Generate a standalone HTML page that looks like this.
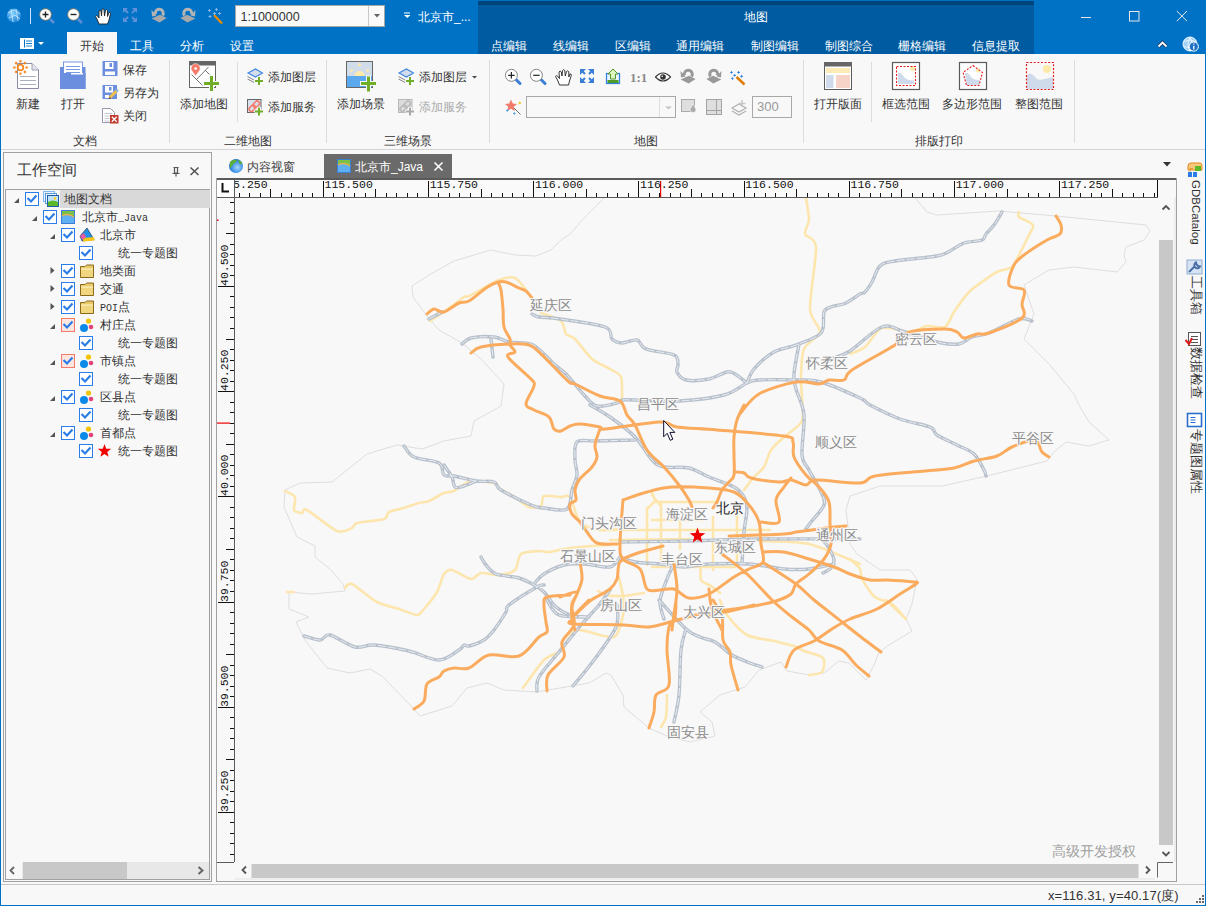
<!DOCTYPE html>
<html><head><meta charset="utf-8">
<style>
*{box-sizing:border-box;margin:0;padding:0}
html,body{width:1206px;height:906px;overflow:hidden;background:#f8f8f8;font-family:"Liberation Sans",sans-serif;font-size:12px;color:#333}
.a{position:absolute}
.w{color:#fff}
.t{position:absolute;white-space:nowrap;line-height:14px;font-size:12px;color:#333}
svg{position:absolute;overflow:visible}
.m{font-family:"Liberation Mono",monospace;font-size:10px}
</style></head><body>
<!-- window frame -->
<div class="a" style="left:0;top:0;width:1206px;height:906px;border:1px solid #0072c6;border-top:none"></div>
<!-- title bar -->
<div class="a" style="left:0;top:0;width:1206px;height:54px;background:#0072c6"></div>
<div class="a" style="left:478px;top:1px;width:556px;height:53px;background:#005ba1"></div>
<div class="a" style="left:478px;top:1px;width:556px;height:4px;background:#00447a"></div>
<div class="a" style="left:67px;top:32px;width:50px;height:22px;background:#f8f8f8"></div>
<div id="titlebar">
<svg style="left:0;top:0" width="1206" height="54">
<defs>
<radialGradient id="glb" cx="0.4" cy="0.35" r="0.7"><stop offset="0" stop-color="#7fd0ff"/><stop offset="1" stop-color="#1a7fd6"/></radialGradient>
</defs>
<!-- globe -->
<circle cx="14" cy="15.5" r="7" fill="url(#glb)"/>
<path d="M8 13 L14 10 L20 14 M9 18 L15 15 L20 19 M11 9 L13 22 M16 9 L18 21" stroke="#d8f0ff" stroke-width="0.8" fill="none" opacity="0.9"/>
<line x1="30.5" y1="8" x2="30.5" y2="24" stroke="#cfe3f5" stroke-width="1"/>
<!-- zoom in -->
<line x1="50" y1="19" x2="54" y2="23" stroke="#5a8fd6" stroke-width="2.5"/>
<circle cx="45.5" cy="14.5" r="5.8" fill="#fff" stroke="#8a7a60" stroke-width="0.9"/>
<path d="M42.5 14.5h6M45.5 11.5v6" stroke="#222" stroke-width="1.4"/>
<!-- zoom out -->
<line x1="78" y1="19" x2="82" y2="23" stroke="#5a8fd6" stroke-width="2.5"/>
<circle cx="73.5" cy="14.5" r="5.8" fill="#fff" stroke="#8a7a60" stroke-width="0.9"/>
<path d="M70.5 14.5h6" stroke="#222" stroke-width="1.4"/>
<!-- hand -->
<path d="M99 24 L97 19 L95.5 16.5 Q96 15 97.5 16 L99 18 L99 11 Q100 9.5 101 11 L101.5 16 L102 9.5 Q103 8 104 9.5 L104.5 16 L105.5 10.5 Q106.5 9 107.5 10.5 L107.5 16.5 L109 12.5 Q110.5 12 110.5 13.5 L109 20 L107.5 24 Z" fill="#fff" stroke="#222" stroke-width="0.9"/>
<!-- full extent disabled -->
<g stroke="#5f90d8" stroke-width="2" fill="none">
<path d="M124 9l4 4M136 9l-4 4M124 21l4-4M136 21l-4-4"/>
</g>
<g fill="#5f90d8"><path d="M123 8h5l-5 5z"/><path d="M137 8h-5l5 5z"/><path d="M123 22h5l-5-5z"/><path d="M137 22h-5l5-5z"/></g>
<!-- rotate1 -->
<path d="M151.6 18.6 L159.9 14.7 L166.6 18 L159.6 22.6 Z" fill="#a8a8a8"/>
<path d="M155.5 14.5 A4 4 0 1 1 162.5 15.5" fill="none" stroke="#b4b4b4" stroke-width="3"/>
<path d="M151.5 10 L156.5 15.5 L152 16.5 Z" fill="#b4b4b4"/>
<path d="M195.4 18.6 L187.1 14.7 L180.4 18 L187.4 22.6 Z" fill="#a8a8a8"/>
<path d="M191.5 14.5 A4 4 0 1 0 184.5 15.5" fill="none" stroke="#b4b4b4" stroke-width="3"/>
<path d="M195.5 10 L190.5 15.5 L195 16.5 Z" fill="#b4b4b4"/>
<!-- wand -->
<line x1="214" y1="15" x2="222" y2="23.5" stroke="#f08c00" stroke-width="2.2"/>
<g fill="#8cb8ea"><path d="M208 10.5h3M209.5 9v3M213 13.5h3M214.5 12v3M208.5 16.5h3M210 15v3M215 9.5h3M216.5 8v3M218 13.5h3M219.5 12v3" stroke="#8cb8ea" stroke-width="0.9"/></g>
<!-- scale combo -->
<rect x="235.5" y="5.5" width="149" height="21" fill="#fafafa" stroke="#a6a6a6"/>
<line x1="368.5" y1="6" x2="368.5" y2="26" stroke="#c8c8c8"/>
<path d="M374 14h6l-3 3.5z" fill="#666"/>
<!-- doc dropdown -->
<path d="M404.5 13h5.5M404 15h6.5l-3.2 3z" stroke="#fff" stroke-width="0" fill="#fff"/>
<rect x="404" y="12.5" width="6" height="1" fill="#fff"/>
<!-- window controls -->
<line x1="1081" y1="17.5" x2="1091" y2="17.5" stroke="#e6e6e6" stroke-width="1"/>
<rect x="1129.5" y="11.5" width="9.5" height="9.5" fill="none" stroke="#e6e6e6" stroke-width="1"/>
<path d="M1176.8 11 L1187 21.2 M1187 11 L1176.8 21.2" stroke="#e6e6e6" stroke-width="1"/>
<!-- collapse caret -->
<path d="M1158.5 46.5 L1162.5 42.5 L1166.5 46.5" stroke="#1a3050" stroke-width="3.2" fill="none"/><path d="M1158.5 46.5 L1162.5 42.5 L1166.5 46.5" stroke="#fff" stroke-width="1.8" fill="none"/>
<!-- info globe -->
<circle cx="1190" cy="44" r="7" fill="#9fd0f7" stroke="#fff" stroke-width="0.9"/>
<path d="M1184 41.5 Q1190 38.5 1196 41.5 M1184 46.5 Q1190 49.5 1196 46.5 M1190 37 Q1186 44 1190 51 M1190 37 Q1194 44 1190 51" stroke="#fff" stroke-width="0.7" fill="none"/>
<circle cx="1193.8" cy="46.6" r="4.6" fill="#1f6fc4" stroke="#fff" stroke-width="1"/>
<path d="M1193.8 45.8v3.6M1193.8 43.6v1" stroke="#fff" stroke-width="1.3"/>
<!-- app menu icon -->
<rect x="20.5" y="38.5" width="13" height="10" fill="#fff" stroke="#fff"/>
<rect x="24" y="39.5" width="1" height="8" fill="#0072c6"/>
<path d="M26 41h6M26 43.5h6M26 46h6" stroke="#0072c6" stroke-width="0.9"/>
<path d="M38 42h6l-3 3z" fill="#fff"/>
</svg>
<div class="t" style="left:240.5px;top:10px;font-size:12.5px;color:#333">1:1000000</div>
<div class="t w" style="left:418px;top:10px;font-size:12px;color:#fff">北京市_...</div>
<div class="t w" style="left:744px;top:10px;font-size:12px;color:#fff">地图</div>
<div class="t" style="left:80px;top:39px;font-size:12px;color:#333">开始</div>
<div class="t w" style="left:130px;top:39px;font-size:12px;color:#fff">工具</div>
<div class="t w" style="left:180px;top:39px;font-size:12px;color:#fff">分析</div>
<div class="t w" style="left:230px;top:39px;font-size:12px;color:#fff">设置</div>
<div class="t w" style="left:491px;top:39px;font-size:12px;color:#fff">点编辑</div>
<div class="t w" style="left:553px;top:39px;font-size:12px;color:#fff">线编辑</div>
<div class="t w" style="left:615px;top:39px;font-size:12px;color:#fff">区编辑</div>
<div class="t w" style="left:676px;top:39px;font-size:12px;color:#fff">通用编辑</div>
<div class="t w" style="left:751px;top:39px;font-size:12px;color:#fff">制图编辑</div>
<div class="t w" style="left:825px;top:39px;font-size:12px;color:#fff">制图综合</div>
<div class="t w" style="left:898px;top:39px;font-size:12px;color:#fff">栅格编辑</div>
<div class="t w" style="left:972px;top:39px;font-size:12px;color:#fff">信息提取</div>
</div>
<!-- ribbon -->
<div class="a" style="left:1px;top:54px;width:1204px;height:95px;background:#f8f8f8"></div>
<div class="a" style="left:1px;top:149px;width:1204px;height:1px;background:#d4d4d4"></div>
<div id="ribbon">
<svg style="left:0;top:54px" width="1206" height="96">
<g transform="translate(0,-54)">
<!-- 新建 -->
<path d="M17.5 63.5 H32 L38.5 70 V88.5 H17.5 Z" fill="#fff" stroke="#8c8aa6" stroke-width="1"/>
<path d="M32 63.5 V70 H38.5" fill="#e6e6ee" stroke="#8c8aa6" stroke-width="0.8"/>
<path d="M20 76.5h16M20 80.5h16M20 84.5h16" stroke="#a8b0c0" stroke-width="1"/>
<g stroke="#f7891f" stroke-width="2.2">
<circle cx="20.5" cy="67.5" r="2.8" fill="#fff" stroke-width="1.8"/>
<path d="M20.5 60.2v2.4M20.5 72.4v2.4M13.2 67.5h2.4M25.4 67.5h2.4M15.3 62.3l1.6 1.6M24.1 71.1l1.6 1.6M15.3 72.7l1.6-1.6M24.1 63.9l1.6-1.6"/>
</g>
<!-- 打开 -->
<rect x="60" y="67" width="25.5" height="22" fill="#6b8fde"/>
<rect x="63.5" y="62" width="19" height="12" fill="#fff" stroke="#6b8fde" stroke-width="0.9"/>
<path d="M66 66.5h14M66 69.5h14M66 72.5h14" stroke="#6b8fde" stroke-width="0.9"/>
<rect x="60" y="73" width="25.5" height="16" fill="#6b8fde"/>
<rect x="71" y="73" width="12" height="1.5" fill="#fff"/>
<!-- 保存 -->
<rect x="102.5" y="61" width="15" height="15" rx="0.5" fill="#6b8fde"/>
<rect x="105" y="62" width="8.5" height="7" fill="#fff"/>
<rect x="109.5" y="63" width="2.5" height="4" fill="#6b8fde"/>
<rect x="105" y="71.5" width="10" height="3.5" fill="#fff"/>
<!-- 另存为 -->
<rect x="102.5" y="85" width="14.5" height="14" rx="0.5" fill="#6b8fde"/>
<rect x="105" y="86" width="8" height="6.5" fill="#fff"/>
<rect x="109" y="87" width="2.5" height="3.5" fill="#6b8fde"/>
<rect x="105" y="95" width="4" height="3" fill="#fff"/>
<path d="M109.5 98 L117 90.5" stroke="#f0c050" stroke-width="3"/>
<path d="M116 89.5 L118 91.5" stroke="#7fb0e8" stroke-width="2"/>
<path d="M108.5 99.5 L110 96.5 L111 98.5Z" fill="#555"/>
<!-- 关闭 -->
<path d="M102.5 108.5 H110.5 L114.5 112.5 V122.5 H102.5 Z" fill="#fff" stroke="#8c8aa6" stroke-width="0.9"/>
<path d="M104.5 113.5h8M104.5 116h8M104.5 118.5h5M104.5 121h5" stroke="#b8bcc8" stroke-width="0.8"/>
<rect x="110" y="115" width="8.5" height="8.5" fill="#c0392b"/>
<path d="M111.8 116.8 L116.7 121.7 M116.7 116.8 L111.8 121.7" stroke="#fff" stroke-width="1.3"/>
<!-- separators -->
<line x1="169.5" y1="60" x2="169.5" y2="143" stroke="#dcdcdc"/>
<line x1="237.5" y1="62" x2="237.5" y2="122" stroke="#dcdcdc"/>
<line x1="326.5" y1="60" x2="326.5" y2="143" stroke="#dcdcdc"/>
<line x1="489.5" y1="60" x2="489.5" y2="143" stroke="#dcdcdc"/>
<line x1="803.5" y1="60" x2="803.5" y2="143" stroke="#dcdcdc"/>
<line x1="871.5" y1="62" x2="871.5" y2="122" stroke="#dcdcdc"/>
<line x1="1074.5" y1="60" x2="1074.5" y2="143" stroke="#dcdcdc"/>
</g>
</svg>
<div class="t" style="left:16px;top:97px">新建</div>
<div class="t" style="left:61px;top:97px">打开</div>
<div class="t" style="left:123px;top:63px">保存</div>
<div class="t" style="left:123px;top:86px">另存为</div>
<div class="t" style="left:123px;top:109px">关闭</div>
<div class="t" style="left:73px;top:134px">文档</div>
<div class="t" style="left:180px;top:97px">添加地图</div>
<div class="t" style="left:268px;top:70px">添加图层</div>
<div class="t" style="left:268px;top:100px">添加服务</div>
<div class="t" style="left:224px;top:134px">二维地图</div>
<div class="t" style="left:337px;top:97px">添加场景</div>
<div class="t" style="left:419px;top:70px">添加图层</div>
<div class="t" style="left:419px;top:100px;color:#a8a8a8">添加服务</div>
<div class="t" style="left:384px;top:134px">三维场景</div>
<div class="t" style="left:634px;top:134px">地图</div>
<div class="t" style="left:814px;top:97px">打开版面</div>
<div class="t" style="left:882px;top:97px">框选范围</div>
<div class="t" style="left:942px;top:97px">多边形范围</div>
<div class="t" style="left:1015px;top:97px">整图范围</div>
<div class="t" style="left:915px;top:134px">排版打印</div>
<svg style="left:0;top:0" width="1206" height="150">
<!-- 添加地图 -->
<rect x="189.5" y="61.5" width="26" height="26" fill="#fff" stroke="#666" stroke-width="1"/>
<rect x="189" y="61" width="27" height="4.5" fill="#666"/>
<path d="M191.5 74.5 L202.5 85.5 M196.5 79.5 L208.5 67 M205 70 L209.5 74.5" stroke="#666" stroke-width="0.9"/>
<path d="M195.6 76 L191.6 70.5 A4.6 4.6 0 1 1 199.6 70.5 Z" fill="#f47b6b" stroke="#fff" stroke-width="0.6"/>
<circle cx="195.6" cy="68.6" r="1.3" fill="#fff"/>
<rect x="203" y="75" width="17" height="17" fill="#f8f8f8" opacity="0" />
<path d="M203.5 83.6h16M211.5 75.5v16" stroke="#f8f8f8" stroke-width="5"/>
<path d="M204 83.6h15M211.5 76v15" stroke="#6fae26" stroke-width="3"/>
<!-- 添加图层 (2D) -->
<g id="addlayer">
<path d="M248 73 L255.5 69 L262.5 73 L255.5 77 Z" fill="#d3dcea" stroke="#3d86e0" stroke-width="1.1"/>
<path d="M247.5 76.5 L254 80 M247.5 79 L254 82.5" stroke="#666" stroke-width="0.8"/>
<path d="M254.5 81h9M259 76.5v9" stroke="#f8f8f8" stroke-width="4"/>
<path d="M255 81h8M259 77v8" stroke="#6fae26" stroke-width="2"/>
</g>
<!-- 添加服务 (2D) -->
<rect x="247.5" y="99.5" width="13.5" height="13" fill="#d8e2ee" stroke="#666" stroke-width="1"/>
<g transform="rotate(-45 254.25 106.25)"><rect x="248" y="104" width="7" height="4.5" rx="2" fill="none" stroke="#f47b6b" stroke-width="1.6"/><rect x="253.5" y="104" width="7" height="4.5" rx="2" fill="none" stroke="#f47b6b" stroke-width="1.6"/></g>
<path d="M254.5 111.5h9M259 107v9" stroke="#f8f8f8" stroke-width="4"/>
<path d="M255 111.5h8M259 107.5v8" stroke="#6fae26" stroke-width="2"/>
<!-- 添加场景 -->
<rect x="346.5" y="61.5" width="26" height="26" fill="#d1dcea" stroke="#666" stroke-width="1"/>
<rect x="347" y="76" width="25" height="11" fill="#5aa9ee"/>
<path d="M354.5 76 A5 5 0 0 1 364.5 76 Z" fill="#fde9a8"/>
<path d="M357.5 66 L359.5 62.5 L361.5 66 Z M349 69.5 L353.5 69.5 L351.5 72.5 Z M365.5 69.5 L370 69.5 L367.8 72.5 Z" fill="#fde9a8"/>
<path d="M360 83.6h17M368.5 75.5v17" stroke="#f8f8f8" stroke-width="5"/>
<path d="M361 83.6h15M368.5 76.5v15" stroke="#6fae26" stroke-width="3"/>
<!-- 添加图层 (3D) -->
<path d="M399 73 L406.5 69 L413.5 73 L406.5 77 Z" fill="#d3dcea" stroke="#3d86e0" stroke-width="1.1"/>
<path d="M398.5 76.5 L405 80 M398.5 79 L405 82.5" stroke="#666" stroke-width="0.8"/>
<path d="M405.5 81h9M410 76.5v9" stroke="#f8f8f8" stroke-width="4"/>
<path d="M406 81h8M410 77v8" stroke="#6fae26" stroke-width="2"/>
<path d="M472 76h5l-2.5 2.5z" fill="#444"/>
<!-- 添加服务 (3D disabled) -->
<rect x="398.5" y="99.5" width="13.5" height="13" fill="#dcdcdc" stroke="#b8b8b8" stroke-width="1"/>
<g transform="rotate(-45 405.25 106.25)"><rect x="399" y="104" width="7" height="4.5" rx="2" fill="none" stroke="#bbb" stroke-width="1.6"/><rect x="404.5" y="104" width="7" height="4.5" rx="2" fill="none" stroke="#bbb" stroke-width="1.6"/></g>
<path d="M405.5 111.5h9M410 107v9" stroke="#f8f8f8" stroke-width="4"/>
<path d="M406 111.5h8M410 107.5v8" stroke="#aaa" stroke-width="2"/>
<!-- map group row1 -->
<line x1="516" y1="79.5" x2="520" y2="83.5" stroke="#3a7fd5" stroke-width="3" stroke-linecap="round"/>
<circle cx="511.4" cy="75.3" r="6" fill="#fff" stroke="#777" stroke-width="0.9"/>
<path d="M508.2 75.3h6.4M511.4 72.1v6.4" stroke="#222" stroke-width="1.2"/>
<line x1="541" y1="79.5" x2="545" y2="83.5" stroke="#3a7fd5" stroke-width="3" stroke-linecap="round"/>
<circle cx="536.4" cy="75.3" r="6" fill="#fff" stroke="#777" stroke-width="0.9"/>
<path d="M533.2 75.3h6.4" stroke="#222" stroke-width="1.2"/>
<path d="M559.5 85 L557.5 80 L555.5 76.5 Q556 75 557.5 76 L559.5 78.5 L559 72 Q560 70 561.3 72 L562 76 L562.5 70.5 Q563.5 68.8 564.8 70.5 L565.3 76 L566.5 71.5 Q567.8 70 568.8 71.8 L568.8 77 L570 74 Q571.5 73.5 571.3 75.5 L569.5 81 L568.5 85 Z" fill="#fff" stroke="#222" stroke-width="0.9"/>
<g fill="#3a7fd5"><path d="M580 69h6l-6 6z"/><path d="M594 69h-6l6 6z"/><path d="M580 83h6l-6-6z"/><path d="M594 83h-6l6-6z"/></g>
<g stroke="#3a7fd5" stroke-width="2"><path d="M581 70l4 4M593 70l-4 4M581 82l4-4M593 82l-4-4"/></g>
<rect x="606.5" y="73.5" width="13" height="10" fill="#e8f4ff" stroke="#2f7ee0" stroke-width="1.2"/>
<rect x="607.5" y="80" width="11" height="3" fill="#4f9a2a"/>
<path d="M613 69 L618 74 L615.5 74 L615.5 79 L610.5 79 L610.5 74 L608 74 Z" fill="#dff5c0" stroke="#4f9a2a" stroke-width="1"/>
<text x="630" y="82" font-family="Liberation Serif" font-weight="bold" font-size="13" fill="#8a8a8a">1:1</text>
<path d="M655.5 77 Q663 69 670.5 77 Q663 85 655.5 77 Z" fill="#fff" stroke="#333" stroke-width="1.1"/>
<circle cx="663" cy="77" r="2.8" fill="#333"/><circle cx="662.2" cy="76.2" r="0.8" fill="#fff"/>
<path d="M680.6 79.6 L688.9 75.7 L695.6 79 L688.6 83.6 Z" fill="#999"/>
<path d="M684.5 75.5 A4 4 0 1 1 691.5 76.5" fill="none" stroke="#999" stroke-width="3"/>
<path d="M680.5 71 L685.5 76.5 L681 77.5 Z" fill="#999"/>
<path d="M721.4 79.6 L713.1 75.7 L706.4 79 L713.4 83.6 Z" fill="#999"/>
<path d="M717.5 75.5 A4 4 0 1 0 710.5 76.5" fill="none" stroke="#999" stroke-width="3"/>
<path d="M721.5 71 L716.5 76.5 L721 77.5 Z" fill="#999"/>
<line x1="736.5" y1="77" x2="744.5" y2="84.5" stroke="#e07b00" stroke-width="2.4"/>
<g fill="#2f7ee0"><path d="M731.5 70.69999999999999l0.6 1.1l1.1 0.6l-1.1 0.6l-0.6 1.1l-0.6-1.1l-1.1-0.6l1.1-0.6z"/><path d="M738.6 70.69999999999999l0.6 1.1l1.1 0.6l-1.1 0.6l-0.6 1.1l-0.6-1.1l-1.1-0.6l1.1-0.6z"/><path d="M734.6 73.69999999999999l0.6 1.1l1.1 0.6l-1.1 0.6l-0.6 1.1l-0.6-1.1l-1.1-0.6l1.1-0.6z"/><path d="M741.6 74.6l0.6 1.1l1.1 0.6l-1.1 0.6l-0.6 1.1l-0.6-1.1l-1.1-0.6l1.1-0.6z"/><path d="M732.4 76.8l0.6 1.1l1.1 0.6l-1.1 0.6l-0.6 1.1l-0.6-1.1l-1.1-0.6l1.1-0.6z"/></g>
<!-- row2 -->
<path d="M511 99.5 L512.8 103.5 L517 104 L513.8 106.8 L514.8 111 L511 108.8 L507.2 111 L508.2 106.8 L505 104 L509.2 103.5 Z" fill="#f47b6b"/>
<path d="M514 108 L520.5 114.5" stroke="#666" stroke-width="0.9"/>
<path d="M518.5 103h2.6M519.8 101.7v2.6" stroke="#f2c200" stroke-width="1"/>
<path d="M506 110.5h2.6M507.3 109.2v2.6M513 113.5h2.6M514.3 112.2v2.6" stroke="#5aa9ee" stroke-width="1"/>
<rect x="526.5" y="96.5" width="149" height="21" fill="#f8f8f8" stroke="#a8a8a8"/>
<line x1="659.5" y1="97" x2="659.5" y2="117" stroke="#dedede"/>
<path d="M665 106.5h7l-3.5 3z" fill="#c4c4c4"/>
<rect x="681.5" y="99.5" width="13" height="12" fill="#dedede" stroke="#aaa"/>
<path d="M693 104 L690 109.5 A3 3 0 1 0 696 109.5 Z" fill="#aaa" stroke="#f8f8f8" stroke-width="0.6"/>
<rect x="706.5" y="99.5" width="15" height="15" fill="#dedede" stroke="#a4a4a4"/>
<path d="M707 110.5h14M716.5 100v14" stroke="#a4a4a4"/>
<path d="M732 108 L739 104 L746 108 L739 112 Z" fill="none" stroke="#b0b0b0" stroke-width="1.2"/>
<path d="M732 111 L739 115 L746 111" fill="none" stroke="#b0b0b0" stroke-width="1.2"/>
<path d="M742 100v7M738.5 103.5h7" stroke="#c8c8c8" stroke-width="1.5"/>
<rect x="752.5" y="96.5" width="39" height="21" fill="#f8f8f8" stroke="#a8a8a8"/>
<!-- 打开版面 -->
<rect x="824.5" y="62.5" width="27" height="27" fill="#fff" stroke="#5a5a5a" stroke-width="1"/>
<rect x="824" y="62" width="28" height="4.5" fill="#666"/>
<rect x="826" y="68" width="24" height="5" fill="#fdebb5"/>
<rect x="826" y="75" width="7.5" height="13" fill="#cfdbea"/>
<rect x="836" y="75" width="14" height="13" fill="#f6d5c8"/>
<!-- 框选范围 -->
<rect x="892.5" y="62.5" width="27" height="27" fill="#fff" stroke="#5a5a5a" stroke-width="1.2"/>
<path d="M898 73 Q901 72 904 77 Q907 80.5 914 80.5 L914.5 84 L898 84 Z" fill="#cfdbea"/>
<circle cx="912.5" cy="68.5" r="2.5" fill="#fde9a8"/>
<rect x="896.5" y="66.5" width="19" height="19" fill="none" stroke="#e21c1c" stroke-width="1.1" stroke-dasharray="2 1.5"/>
<!-- 多边形范围 -->
<rect x="959.5" y="62.5" width="27" height="27" fill="#fff" stroke="#5a5a5a" stroke-width="1.2"/>
<path d="M965 73 Q968 72 971 77 Q974 80.5 980 80 L979 85 L966 85 Z" fill="#cfdbea"/>
<circle cx="978" cy="70.5" r="2" fill="#fde9a8"/>
<path d="M973 65.5 L982.5 72.5 L979 85.5 L966.5 85.5 L963 72.5 Z" fill="none" stroke="#e21c1c" stroke-width="1.1" stroke-dasharray="2 1.5"/>
<!-- 整图范围 -->
<path d="M1027 75 Q1031 72 1034 76 Q1037 80.5 1042 79.5 Q1046 78.5 1053 77 L1053 89 L1027 89 Z" fill="#cfdbea"/>
<circle cx="1047" cy="69" r="4" fill="#fde9a8"/>
<rect x="1026.5" y="62.5" width="27" height="27" fill="none" stroke="#e21c1c" stroke-width="1.2" stroke-dasharray="2 1.6"/>
</svg>
<div class="t" style="left:757px;top:100px;font-size:13px;color:#999">300</div>
</div><!--endribbon-->
<!-- workspace panel -->
<div class="a" style="left:3px;top:152px;width:209px;height:730px;border:1px solid #a0a0a0"></div>
<div class="a" style="left:5px;top:189px;width:205px;height:691px;border:1px solid #a0a0a0;background:#f8f8f8"></div>
<div id="panel">
<div class="a" style="left:60px;top:190px;width:150px;height:18px;background:#d9d9d9"></div>
<svg style="left:0;top:0" width="220" height="900">
<path d="M19 198 L19 203 L14 203 Z" fill="#555"/>
<rect x="25.5" y="192.5" width="13" height="13" fill="#fff" stroke="#2b7de9" stroke-width="1"/>
<path d="M27.5 198 L31 201.5 L36.5 195.5" fill="none" stroke="#2b7de9" stroke-width="2.2"/>
<rect x="43.5" y="191.5" width="11" height="10" fill="#e8f3ff" stroke="#7fb8f0"/>
<rect x="45.5" y="193.5" width="11" height="10" fill="#e8f3ff" stroke="#5a9be0"/>
<rect x="47.5" y="195.5" width="11" height="11" fill="#bfe3ff" stroke="#1d5fa8"/>
<path d="M48 202 Q53 199 58 202 L58 206 L48 206 Z" fill="#5cb82a"/>
<circle cx="55" cy="198.5" r="1.4" fill="#ffd23a"/>
<path d="M37 216 L37 221 L32 221 Z" fill="#555"/>
<rect x="43.5" y="210.5" width="13" height="13" fill="#fff" stroke="#2b7de9" stroke-width="1"/>
<path d="M45.5 216 L49 219.5 L54.5 213.5" fill="none" stroke="#2b7de9" stroke-width="2.2"/>
<rect x="61.5" y="210.5" width="13" height="13" fill="#5fb0f0" stroke="#3a7fd5"/>
<path d="M62 211 L74 211 L74 217 Q68 213 62 216 Z" fill="#7cc04a"/>
<path d="M62 216 Q68 213 74 217" fill="none" stroke="#f0b050" stroke-width="1.2"/>
<path d="M55 234 L55 239 L50 239 Z" fill="#555"/>
<rect x="61.5" y="228.5" width="13" height="13" fill="#fff" stroke="#2b7de9" stroke-width="1"/>
<path d="M63.5 234 L67 237.5 L72.5 231.5" fill="none" stroke="#2b7de9" stroke-width="2.2"/>
<path d="M87 228 L94 239.5 L82 241 L80 236 Z" fill="#1e90e8" stroke="#223" stroke-width="0.6"/>
<path d="M83 238 L94 237 L94.5 240.5 L83 241.5 Z" fill="#f5c518"/>
<path d="M80 236 L84 233 L86 237 L82.5 240 Z" fill="#e85aa0"/>
<rect x="79.5" y="246.5" width="13" height="13" fill="#fff" stroke="#2b7de9" stroke-width="1"/>
<path d="M81.5 252 L85 255.5 L90.5 249.5" fill="none" stroke="#2b7de9" stroke-width="2.2"/>
<path d="M50.5 267 L54.5 270.5 L50.5 274 Z" fill="#555"/>
<rect x="61.5" y="264.5" width="13" height="13" fill="#fff" stroke="#2b7de9" stroke-width="1"/>
<path d="M63.5 270 L67 273.5 L72.5 267.5" fill="none" stroke="#2b7de9" stroke-width="2.2"/>
<path d="M80.5 266.5 L85 266.5 L86.5 265 L93.5 265 L93.5 277.5 L80.5 277.5 Z" fill="#e9c96a" stroke="#8a6a1a" stroke-width="1"/>
<rect x="81" y="269" width="12" height="8" fill="#f0d77f"/>
<path d="M81 269 H93" stroke="#fff6cc" stroke-width="1"/>
<path d="M50.5 285 L54.5 288.5 L50.5 292 Z" fill="#555"/>
<rect x="61.5" y="282.5" width="13" height="13" fill="#fff" stroke="#2b7de9" stroke-width="1"/>
<path d="M63.5 288 L67 291.5 L72.5 285.5" fill="none" stroke="#2b7de9" stroke-width="2.2"/>
<path d="M80.5 284.5 L85 284.5 L86.5 283 L93.5 283 L93.5 295.5 L80.5 295.5 Z" fill="#e9c96a" stroke="#8a6a1a" stroke-width="1"/>
<rect x="81" y="287" width="12" height="8" fill="#f0d77f"/>
<path d="M81 287 H93" stroke="#fff6cc" stroke-width="1"/>
<path d="M50.5 303 L54.5 306.5 L50.5 310 Z" fill="#555"/>
<rect x="61.5" y="300.5" width="13" height="13" fill="#fff" stroke="#2b7de9" stroke-width="1"/>
<path d="M63.5 306 L67 309.5 L72.5 303.5" fill="none" stroke="#2b7de9" stroke-width="2.2"/>
<path d="M80.5 302.5 L85 302.5 L86.5 301 L93.5 301 L93.5 313.5 L80.5 313.5 Z" fill="#e9c96a" stroke="#8a6a1a" stroke-width="1"/>
<rect x="81" y="305" width="12" height="8" fill="#f0d77f"/>
<path d="M81 305 H93" stroke="#fff6cc" stroke-width="1"/>
<path d="M55 324 L55 329 L50 329 Z" fill="#555"/>
<rect x="61.5" y="318.5" width="13" height="13" fill="#fde6e0" stroke="#f47b6b" stroke-width="1"/>
<path d="M63.5 324 L67 327.5 L72.5 321.5" fill="none" stroke="#2b7de9" stroke-width="2.2"/>
<circle cx="84" cy="328" r="4" fill="#0a8ae8"/>
<circle cx="88.5" cy="321" r="2.6" fill="#f2c300"/>
<circle cx="91" cy="327" r="2.3" fill="#e0457a"/>
<rect x="79.5" y="336.5" width="13" height="13" fill="#fff" stroke="#2b7de9" stroke-width="1"/>
<path d="M81.5 342 L85 345.5 L90.5 339.5" fill="none" stroke="#2b7de9" stroke-width="2.2"/>
<path d="M55 360 L55 365 L50 365 Z" fill="#555"/>
<rect x="61.5" y="354.5" width="13" height="13" fill="#fde6e0" stroke="#f47b6b" stroke-width="1"/>
<path d="M63.5 360 L67 363.5 L72.5 357.5" fill="none" stroke="#2b7de9" stroke-width="2.2"/>
<circle cx="84" cy="364" r="4" fill="#0a8ae8"/>
<circle cx="88.5" cy="357" r="2.6" fill="#f2c300"/>
<circle cx="91" cy="363" r="2.3" fill="#e0457a"/>
<rect x="79.5" y="372.5" width="13" height="13" fill="#fff" stroke="#2b7de9" stroke-width="1"/>
<path d="M81.5 378 L85 381.5 L90.5 375.5" fill="none" stroke="#2b7de9" stroke-width="2.2"/>
<path d="M55 396 L55 401 L50 401 Z" fill="#555"/>
<rect x="61.5" y="390.5" width="13" height="13" fill="#fff" stroke="#2b7de9" stroke-width="1"/>
<path d="M63.5 396 L67 399.5 L72.5 393.5" fill="none" stroke="#2b7de9" stroke-width="2.2"/>
<circle cx="84" cy="400" r="4" fill="#0a8ae8"/>
<circle cx="88.5" cy="393" r="2.6" fill="#f2c300"/>
<circle cx="91" cy="399" r="2.3" fill="#e0457a"/>
<rect x="79.5" y="408.5" width="13" height="13" fill="#fff" stroke="#2b7de9" stroke-width="1"/>
<path d="M81.5 414 L85 417.5 L90.5 411.5" fill="none" stroke="#2b7de9" stroke-width="2.2"/>
<path d="M55 432 L55 437 L50 437 Z" fill="#555"/>
<rect x="61.5" y="426.5" width="13" height="13" fill="#fff" stroke="#2b7de9" stroke-width="1"/>
<path d="M63.5 432 L67 435.5 L72.5 429.5" fill="none" stroke="#2b7de9" stroke-width="2.2"/>
<circle cx="84" cy="436" r="4" fill="#0a8ae8"/>
<circle cx="88.5" cy="429" r="2.6" fill="#f2c300"/>
<circle cx="91" cy="435" r="2.3" fill="#e0457a"/>
<rect x="79.5" y="444.5" width="13" height="13" fill="#fff" stroke="#2b7de9" stroke-width="1"/>
<path d="M81.5 450 L85 453.5 L90.5 447.5" fill="none" stroke="#2b7de9" stroke-width="2.2"/>
<polygon points="104.50,444.00 106.20,448.65 111.16,448.84 107.26,451.90 108.61,456.66 104.50,453.90 100.39,456.66 101.74,451.90 97.84,448.84 102.80,448.65" fill="#f20000"/>
<path d="M173.5 167.5h5M174.5 167.5v5.5h3v-5.5M172.5 173.5h7M176 173.5v3" stroke="#555" stroke-width="1.2" fill="none"/>
<path d="M190.5 167.5 L198.5 175 M198.5 167.5 L190.5 175" stroke="#555" stroke-width="1.6"/>
<rect x="6" y="862" width="203" height="17" fill="#e8e8e8"/>
<rect x="6" y="862" width="16" height="17" fill="#f8f8f8"/>
<rect x="23" y="862" width="104" height="17" fill="#c8c8c8"/>
<path d="M14 867 L10.5 870.5 L14 874" stroke="#666" stroke-width="1.8" fill="none"/>
<path d="M198.5 867 L202.5 870.5 L198.5 874" stroke="#666" stroke-width="2" fill="none"/>
</svg>
<div class="t" style="left:17px;top:161px;font-size:14.5px;line-height:18px;color:#333">工作空间</div>
<div class="t" style="left:64px;top:192px">地图文档</div>
<div class="t" style="left:82px;top:210px">北京市<span class="m">_Java</span></div>
<div class="t" style="left:100px;top:228px">北京市</div>
<div class="t" style="left:118px;top:246px">统一专题图</div>
<div class="t" style="left:100px;top:264px">地类面</div>
<div class="t" style="left:100px;top:282px">交通</div>
<div class="t" style="left:100px;top:300px"><span class="m">POI</span>点</div>
<div class="t" style="left:100px;top:318px">村庄点</div>
<div class="t" style="left:118px;top:336px">统一专题图</div>
<div class="t" style="left:100px;top:354px">市镇点</div>
<div class="t" style="left:118px;top:372px">统一专题图</div>
<div class="t" style="left:100px;top:390px">区县点</div>
<div class="t" style="left:118px;top:408px">统一专题图</div>
<div class="t" style="left:100px;top:426px">首都点</div>
<div class="t" style="left:118px;top:444px">统一专题图</div>
</div><!--endpanel-->
<!-- map view -->
<div class="a" style="left:216px;top:178px;width:961px;height:704px;border:1px solid #a0a0a0;border-top:none"></div>






<div id="map">
<svg style="left:235px;top:197px" width="923" height="665" viewBox="235 197 923 665">
<defs><clipPath id="mc"><rect x="235" y="197" width="923" height="665"/></clipPath></defs>
<g clip-path="url(#mc)" fill="none" stroke-linecap="round" stroke-linejoin="round">
<path d="M610,190 C610.0,190.0 603.0,199.0 603,199 C603.0,199.0 585.0,217.0 585,217 C585.0,217.0 570.0,234.0 570,234 C570.0,234.0 561.0,240.0 561,240 C561.0,240.0 551.0,250.0 551,250 C551.0,250.0 536.0,256.0 536,256 C536.0,256.0 515.0,255.0 515,255 C515.0,255.0 491.0,250.0 491,250 C491.0,250.0 454.0,261.0 454,261 C454.0,261.0 429.0,275.0 429,275 C429.0,275.0 412.0,286.0 412,286 C412.0,286.0 413.0,297.0 413,297 C413.0,297.0 424.0,312.0 424,312 C424.0,312.0 432.0,322.0 432,322 C432.0,322.0 439.0,330.0 439,330 C439.0,330.0 462.0,343.0 462,343 C462.0,343.0 481.0,359.0 481,359 C481.0,359.0 504.0,384.0 504,384 C504.0,384.0 501.0,406.0 501,406 C501.0,406.0 494.0,410.0 494,410 C494.0,410.0 474.0,421.0 474,421 C474.0,421.0 471.0,436.0 471,436 C471.0,436.0 444.0,441.0 444,441 C444.0,441.0 422.0,449.0 422,449 C422.0,449.0 397.0,445.0 397,445 C397.0,445.0 367.0,454.0 367,454 C367.0,454.0 332.0,482.0 332,482 C332.0,482.0 300.0,483.0 300,483 C300.0,483.0 285.0,490.0 285,490 C285.0,490.0 284.0,507.0 284,507 C284.0,507.0 297.0,537.0 297,537 C297.0,537.0 315.0,546.0 315,546 C315.0,546.0 315.0,557.0 315,557 C315.0,557.0 330.0,569.0 330,569 C330.0,569.0 343.0,584.0 343,584 C343.0,584.0 345.0,591.0 345,591 C345.0,591.0 312.0,594.0 312,594 C312.0,594.0 289.0,592.0 289,592 C289.0,592.0 289.0,609.0 289,609 C289.0,609.0 309.0,617.0 309,617 C309.0,617.0 296.0,622.0 296,622 C296.0,622.0 305.0,640.0 305,640 C305.0,640.0 327.0,668.0 327,668 C327.0,668.0 350.0,673.0 350,673 C350.0,673.0 370.0,669.0 370,669 C370.0,669.0 382.0,676.0 382,676 C382.0,676.0 414.0,709.0 414,709 C414.0,709.0 420.0,716.0 420,716 C420.0,716.0 452.0,706.0 452,706 C452.0,706.0 467.0,688.0 467,688 C467.0,688.0 487.0,683.0 487,683 C487.0,683.0 504.0,690.0 504,690 C504.0,690.0 537.0,692.0 537,692 C537.0,692.0 589.0,683.0 589,683 C589.0,683.0 606.0,673.0 606,673 C606.0,673.0 611.0,675.0 611,675 C611.0,675.0 623.0,695.0 623,695 C623.0,695.0 624.0,707.0 624,707 C624.0,707.0 649.0,728.0 649,728 C649.0,728.0 667.0,736.0 667,736 C667.0,736.0 690.0,742.0 690,742 C690.0,742.0 715.0,736.0 715,736 C715.0,736.0 712.0,722.0 712,722 C712.0,722.0 700.0,712.0 700,712 C700.0,712.0 720.0,695.0 720,695 C720.0,695.0 745.0,687.0 745,687 C745.0,687.0 759.0,670.0 759,670 C759.0,670.0 781.0,662.0 781,662 C781.0,662.0 787.0,671.0 787,671 C787.0,671.0 809.0,675.0 809,675 C809.0,675.0 824.0,673.0 824,673 C824.0,673.0 839.0,661.0 839,661 C839.0,661.0 849.0,663.0 849,663 C849.0,663.0 866.0,680.0 866,680 C866.0,680.0 874.0,665.0 874,665 C874.0,665.0 879.0,652.0 879,652 C879.0,652.0 889.0,645.0 889,645 C889.0,645.0 912.0,631.0 912,631 C912.0,631.0 906.0,619.0 906,619 C906.0,619.0 912.0,604.0 912,604 C912.0,604.0 917.0,579.0 917,579 C917.0,579.0 910.0,570.0 910,570 C910.0,570.0 880.0,570.0 880,570 C880.0,570.0 857.0,554.0 857,554 C857.0,554.0 850.0,544.0 850,544 C850.0,544.0 846.0,510.0 846,510 C846.0,510.0 850.0,496.0 850,496 C850.0,496.0 880.0,486.0 880,486 C880.0,486.0 942.0,486.0 942,486 C942.0,486.0 987.0,476.0 987,476 C987.0,476.0 1047.0,461.0 1047,461 C1047.0,461.0 1054.0,452.0 1054,452 C1054.0,452.0 1066.0,442.0 1066,442 C1066.0,442.0 1089.0,446.0 1089,446 C1089.0,446.0 1109.0,440.0 1109,440 C1109.0,440.0 1089.0,422.0 1089,422 C1089.0,422.0 1079.0,405.0 1079,405 C1079.0,405.0 1074.0,394.0 1074,394 C1074.0,394.0 1049.0,364.0 1049,364 C1049.0,364.0 1024.0,339.0 1024,339 C1024.0,339.0 1034.0,314.0 1034,314 C1034.0,314.0 1024.0,285.0 1024,285 C1024.0,285.0 1049.0,270.0 1049,270 C1049.0,270.0 1074.0,267.0 1074,267 C1074.0,267.0 1117.0,272.0 1117,272 C1117.0,272.0 1126.0,262.0 1126,262 C1126.0,262.0 1124.0,255.0 1124,255 C1124.0,255.0 1126.0,247.0 1126,247 C1126.0,247.0 1144.0,240.0 1144,240 C1144.0,240.0 1150.0,231.0 1150,231 C1150.0,231.0 1146.0,225.0 1146,225 C1146.0,225.0 1056.0,216.0 1056,216 C1056.0,216.0 999.0,211.0 999,211 C999.0,211.0 937.0,215.0 937,215 C937.0,215.0 927.0,212.0 927,212 C927.0,212.0 916.0,199.0 916,199 C916.0,199.0 910.0,190.0 910,190" stroke="#dddddd" stroke-width="1"/>
<path d="M430,321 C431.9,319.8 439.5,315.2 444,312 C448.5,308.8 460.7,299.1 464,297 C467.3,294.9 464.3,298.3 469,296 C473.7,293.7 492.9,282.4 499,280 C505.1,277.6 511.4,276.7 515,278 C518.6,279.3 524.5,288.4 526,290 M541,313 C543.7,314.1 557.7,318.2 561,321 C564.3,323.8 564.1,331.6 566,334 C567.9,336.4 571.5,335.7 575,339 C578.5,342.3 587.3,355.0 592,359 C596.7,363.0 606.1,366.6 610,369 C613.9,371.4 619.4,372.9 621,377 C622.6,381.1 621.9,396.9 622,400 M806,198 C806.4,200.9 809.1,215.2 809,220 C808.9,224.8 804.1,230.4 805,234 C805.9,237.6 815.3,237.0 816,247 C816.7,257.0 809.5,297.7 810,309 C810.5,320.3 820.8,326.7 820,332 C819.2,337.3 806.5,342.7 804,349 C801.5,355.3 801.1,370.2 801,379 C800.9,387.8 803.3,408.9 803,415 C802.7,421.1 801.5,422.1 799,425 C796.5,427.9 787.7,433.7 784,437 C780.3,440.3 773.7,446.0 771,450 C768.3,454.0 766.3,463.4 764,467 C761.7,470.6 756.7,473.9 754,477 C751.3,480.1 745.3,488.3 744,490 M850,354 C852.0,353.1 860.7,350.5 865,347 C869.3,343.5 876.0,330.0 882,328 C888.0,326.0 904.0,332.3 910,332 C916.0,331.7 922.3,326.7 927,326 C931.7,325.3 941.4,328.9 945,327 C948.6,325.1 950.8,316.7 954,312 C957.2,307.3 964.3,296.7 969,292 C973.7,287.3 985.0,279.8 989,277 C993.0,274.2 995.9,272.3 999,271 C1002.1,269.7 1009.3,269.1 1012,267 C1014.7,264.9 1016.7,259.3 1019,255 C1021.3,250.7 1027.1,239.0 1029,235 C1030.9,231.0 1034.3,227.4 1033,225 C1031.7,222.6 1020.9,218.7 1019,217 C1017.1,215.3 1019.0,212.7 1019,212 M285,491 C286.3,491.8 293.8,494.5 295,497 C296.2,499.5 293.1,507.9 294,510 C294.9,512.1 300.3,513.0 302,513 C303.7,513.0 302.3,507.6 307,510 C311.7,512.4 331.0,528.6 337,531 C343.0,533.4 349.3,529.1 352,528 C354.7,526.9 352.7,524.2 357,523 C361.3,521.8 379.7,520.5 384,519 C388.3,517.5 386.3,513.5 389,512 C391.7,510.5 400.0,509.2 404,508 C408.0,506.8 415.7,503.9 419,503 C422.3,502.1 425.7,502.3 429,501 C432.3,499.7 440.7,494.3 444,493 C447.3,491.7 450.7,492.5 454,491 C457.3,489.5 463.7,483.1 469,482 C474.3,480.9 490.0,482.2 494,483 C498.0,483.8 496.1,486.0 499,488 C501.9,490.0 512.0,495.5 516,498 C520.0,500.5 525.7,505.9 529,507 C532.3,508.1 539.0,507.5 541,506 C543.0,504.5 541.3,497.2 544,496 C546.7,494.8 557.5,496.9 561,497 C564.5,497.1 567.5,493.7 570,497 C572.5,500.3 576.0,517.6 580,522 C584.0,526.4 594.7,529.1 600,530 C605.3,530.9 617.3,529.1 620,529 M345,588 C345.9,587.5 347.7,582.1 352,584 C356.3,585.9 370.7,598.7 377,602 C383.3,605.3 393.7,607.3 399,609 C404.3,610.7 413.7,615.0 417,615 C420.3,615.0 421.3,612.1 424,609 C426.7,605.9 434.3,596.7 437,592 C439.7,587.3 442.0,576.9 444,574 C446.0,571.1 448.4,569.3 452,570 C455.6,570.7 467.1,578.6 471,579 C474.9,579.4 477.3,573.5 481,573 C484.7,572.5 494.5,575.4 499,575 C503.5,574.6 512.1,572.8 515,570 C517.9,567.2 517.8,556.5 521,554 C524.2,551.5 535.3,551.3 539,551 C542.7,550.7 544.9,552.4 549,552 C553.1,551.6 560.5,549.1 570,548 C579.5,546.9 613.3,544.5 620,544 M287,592 L294,592 M523,688 C525.8,684.3 538.8,665.1 544,660 C549.2,654.9 557.6,654.0 562,650 C566.4,646.0 570.1,631.7 577,630 C583.9,628.3 607.7,639.5 614,637 C620.3,634.5 622.7,614.5 624,611 M667,695 C666.9,697.9 666.8,712.7 666,717 C665.2,721.3 661.7,725.7 661,727 M598,591 C599.1,591.5 602.7,594.3 606,595 C609.3,595.7 617.9,596.3 623,596 C628.1,595.7 641.2,593.4 644,593 M619,577 C619.5,579.5 622.3,591.5 623,596 C623.7,600.5 623.9,609.0 624,611 M701,565 C701.0,567.0 699.7,577.2 701,580 C702.3,582.8 708.5,584.3 711,586 C713.5,587.7 718.8,592.1 720,593 M720,600 C720.9,602.0 723.4,610.3 727,615 C730.6,619.7 740.7,631.5 747,635 C753.3,638.5 767.7,639.5 774,641 C780.3,642.5 790.0,644.7 794,646 C798.0,647.3 800.1,649.4 804,651 C807.9,652.6 820.6,655.2 823,658 C825.4,660.8 823.9,669.7 822,672 C820.1,674.3 810.7,674.6 809,675 M850,559 C851.3,560.3 858.4,566.3 860,569 C861.6,571.7 860.0,575.3 862,579 C864.0,582.7 871.0,593.7 875,597 C879.0,600.3 887.9,601.1 892,604 C896.1,606.9 904.1,617.0 906,619 M886,600 L906,619 M654,502 L716,502 M610,530 L770,530 M610,540 L690,539 M652,520 L703,520 M647,508 L647,565 M661,504 L661,565 M680,520 L680,549 M713,517 L713,570 M737,514 L737,562 M652,567 L735,567 M652,493 L656,502 M654,502 L648,508 M759,541 C765.7,541.4 795.5,540.9 809,544 C822.5,547.1 853.2,561.3 860,564 M652,495 L660,505" stroke="#fde6ad" stroke-width="2.6"/>
<path d="M429,319 L442,312 M462,344 C463.5,343.0 465.7,339.2 471,338 C476.3,336.8 487.7,336.3 494,337 C500.3,337.7 502.8,340.8 509,342 C515.2,343.2 525.2,342.0 531,344 C536.8,346.0 540.2,350.7 544,354 C547.8,357.3 550.3,360.7 554,364 C557.7,367.3 560.8,368.7 566,374 C571.2,379.3 579.8,390.7 585,396 C590.2,401.3 591.7,404.8 597,406 C602.3,407.2 612.8,404.0 617,403 C621.2,402.0 619.0,400.5 622,400 C625.0,399.5 625.5,399.8 635,400 C644.5,400.2 664.2,401.8 679,401 C693.8,400.2 712.7,398.0 724,395 C735.3,392.0 741.2,385.5 747,383 C752.8,380.5 750.8,380.5 759,380 C767.2,379.5 785.7,379.7 796,380 C806.3,380.3 810.3,379.0 821,382 C831.7,385.0 851.8,394.2 860,398 C868.2,401.8 863.3,401.5 870,405 C876.7,408.5 890.0,415.3 900,419 C910.0,422.7 923.8,424.3 930,427 C936.2,429.7 932.5,432.0 937,435 C941.5,438.0 950.8,441.8 957,445 C963.2,448.2 969.5,449.8 974,454 C978.5,458.2 982.0,466.3 984,470 C986.0,473.7 985.7,475.0 986,476 M491,339 L493,357 M532,314 C533.2,314.5 534.3,316.2 539,317 C543.7,317.8 549.0,317.3 560,319 C571.0,320.7 596.3,323.7 605,327 C613.7,330.3 609.2,336.3 612,339 C614.8,341.7 617.8,342.8 622,343 C626.2,343.2 633.0,339.0 637,340 C641.0,341.0 639.8,346.5 646,349 C652.2,351.5 668.7,352.5 674,355 C679.3,357.5 677.5,361.2 678,364 C678.5,366.8 675.7,369.3 677,372 C678.3,374.7 680.7,378.8 686,380 C691.3,381.2 702.2,380.3 709,379 C715.8,377.7 722.7,372.8 727,372 C731.3,371.2 731.7,372.2 735,374 C738.3,375.8 745.0,381.5 747,383 M747,383 C748.2,380.7 749.5,374.2 754,369 C758.5,363.8 767.0,356.0 774,352 C781.0,348.0 788.2,348.2 796,345 C803.8,341.8 816.3,338.5 821,333 C825.7,327.5 822.3,316.3 824,312 C825.7,307.7 827.3,308.5 831,307 C834.7,305.5 841.2,305.2 846,303 C850.8,300.8 856.8,295.8 860,294 C863.2,292.2 863.0,294.0 865,292 C867.0,290.0 869.5,286.3 872,282 C874.5,277.7 876.2,269.5 880,266 C883.8,262.5 885.5,262.7 895,261 C904.5,259.3 927.8,257.7 937,256 C946.2,254.3 945.5,253.2 950,251 C954.5,248.8 958.7,244.8 964,243 C969.3,241.2 978.3,241.5 982,240 C985.7,238.5 984.0,236.5 986,234 C988.0,231.5 991.3,228.7 994,225 C996.7,221.3 1000.7,214.2 1002,212 M799,344 C798.2,349.0 794.5,366.5 794,374 C793.5,381.5 794.3,382.2 796,389 C797.7,395.8 803.0,404.0 804,415 C805.0,426.0 801.2,445.8 802,455 C802.8,464.2 805.8,463.8 809,470 C812.2,476.2 818.5,486.2 821,492 C823.5,497.8 825.7,500.0 824,505 C822.3,510.0 814.0,518.0 811,522 C808.0,526.0 806.8,527.8 806,529 M831,359 C834.2,357.7 841.5,356.3 850,351 C858.5,345.7 872.8,330.2 882,327 C891.2,323.8 895.8,329.5 905,332 C914.2,334.5 928.0,340.0 937,342 C946.0,344.0 953.2,344.8 959,344 C964.8,343.2 967.0,338.8 972,337 C977.0,335.2 981.2,336.0 989,333 C996.8,330.0 1011.8,321.0 1019,319 C1026.2,317.0 1029.8,320.7 1032,321 M404,446 C405.7,447.8 408.2,454.2 414,457 C419.8,459.8 434.0,460.0 439,463 C444.0,466.0 441.5,472.8 444,475 C446.5,477.2 448.7,475.0 454,476 C459.3,477.0 469.3,480.0 476,481 C482.7,482.0 489.8,480.5 494,482 C498.2,483.5 494.8,486.2 501,490 C507.2,493.8 523.8,502.0 531,505 C538.2,508.0 538.0,507.3 544,508 C550.0,508.7 562.3,512.0 567,509 C571.7,506.0 570.3,495.7 572,490 C573.7,484.3 576.5,480.0 577,475 C577.5,470.0 575.0,465.5 575,460 C575.0,454.5 573.7,445.2 577,442 C580.3,438.8 585.3,441.3 595,441 C604.7,440.7 628.3,440.2 635,440 M590,405 C593.3,407.0 602.5,411.7 610,417 C617.5,422.3 628.0,429.8 635,437 C642.0,444.2 647.2,455.0 652,460 C656.8,465.0 657.8,465.7 664,467 C670.2,468.3 681.5,466.3 689,468 C696.5,469.7 701.5,473.8 709,477 C716.5,480.2 728.2,483.7 734,487 C739.8,490.3 741.8,493.3 744,497 C746.2,500.7 747.0,503.2 747,509 C747.0,514.8 744.8,522.8 744,532 C743.2,541.2 742.3,558.7 742,564 M444,465 C445.3,467.0 450.2,473.3 452,477 C453.8,480.7 453.0,485.5 455,487 C457.0,488.5 460.5,487.0 464,486 C467.5,485.0 474.0,481.8 476,481 M481,557 C481.8,558.3 483.5,562.2 486,565 C488.5,567.8 490.5,571.8 496,574 C501.5,576.2 512.7,576.2 519,578 C525.3,579.8 529.8,582.7 534,585 C538.2,587.3 540.3,588.3 544,592 C547.7,595.7 551.7,603.2 556,607 C560.3,610.8 565.2,613.3 570,615 C574.8,616.7 582.5,616.7 585,617 M534,584 C535.7,582.3 539.0,577.2 544,574 C549.0,570.8 557.2,566.7 564,565 C570.8,563.3 577.3,563.7 585,564 C592.7,564.3 604.2,568.2 610,567 C615.8,565.8 618.3,558.7 620,557 M304,636 C306.7,636.7 315.7,640.2 320,640 C324.3,639.8 324.2,633.8 330,635 C335.8,636.2 347.7,645.3 355,647 C362.3,648.7 365.0,644.3 374,645 C383.0,645.7 398.2,648.5 409,651 C419.8,653.5 430.7,660.2 439,660 C447.3,659.8 454.8,652.5 459,650 C463.2,647.5 462.3,645.7 464,645 C465.7,644.3 465.7,646.8 469,646 C472.3,645.2 479.8,642.7 484,640 C488.2,637.3 490.3,634.7 494,630 C497.7,625.3 503.5,616.2 506,612 C508.5,607.8 503.8,609.2 509,605 C514.2,600.8 531.2,590.3 537,587 C542.8,583.7 542.8,585.3 544,585 M620,542 C630.7,541.8 660.8,541.5 684,541 C707.2,540.5 729.7,539.3 759,539 C788.3,538.7 843.2,539.0 860,539 M620,557 C622.5,557.8 628.3,560.8 635,562 C641.7,563.2 651.8,563.2 660,564 C668.2,564.8 675.8,567.0 684,567 C692.2,567.0 698.2,564.5 709,564 C719.8,563.5 736.5,563.2 749,564 C761.5,564.8 774.0,568.2 784,569 C794.0,569.8 800.7,569.8 809,569 C817.3,568.2 829.8,564.8 834,564 M674,564 C672.8,566.5 669.3,572.8 667,579 C664.7,585.2 660.5,594.3 660,601 C659.5,607.7 663.3,616.0 664,619 M823,540 C824.0,541.3 827.2,544.7 829,548 C830.8,551.3 833.7,556.7 834,560 C834.3,563.3 832.8,565.8 831,568 C829.2,570.2 824.3,572.2 823,573 M537,691 C537.3,688.7 535.3,683.5 539,677 C542.7,670.5 551.8,660.8 559,652 C566.2,643.2 575.3,631.8 582,624 C588.7,616.2 594.3,610.7 599,605 C603.7,599.3 608.2,592.5 610,590 M573,686 C576.5,681.7 586.8,669.8 594,660 C601.2,650.2 612.2,636.2 616,627 C619.8,617.8 616.8,608.7 617,605 M547,600 C549.0,602.5 552.0,612.2 559,615 C566.0,617.8 584.0,616.7 589,617 M659,600 C663.5,604.8 679.2,622.8 686,629 C692.8,635.2 695.2,634.8 700,637 C704.8,639.2 709.7,639.0 715,642 C720.3,645.0 726.2,651.5 732,655 C737.8,658.5 745.0,661.0 750,663 C755.0,665.0 760.0,666.3 762,667 M686,629 C685.2,632.5 682.2,639.0 681,650 C679.8,661.0 680.2,683.0 679,695 C677.8,707.0 674.8,717.5 674,722" stroke="#b7c0cb" stroke-width="3.4"/>
<path d="M429,319 L442,312 M462,344 C463.5,343.0 465.7,339.2 471,338 C476.3,336.8 487.7,336.3 494,337 C500.3,337.7 502.8,340.8 509,342 C515.2,343.2 525.2,342.0 531,344 C536.8,346.0 540.2,350.7 544,354 C547.8,357.3 550.3,360.7 554,364 C557.7,367.3 560.8,368.7 566,374 C571.2,379.3 579.8,390.7 585,396 C590.2,401.3 591.7,404.8 597,406 C602.3,407.2 612.8,404.0 617,403 C621.2,402.0 619.0,400.5 622,400 C625.0,399.5 625.5,399.8 635,400 C644.5,400.2 664.2,401.8 679,401 C693.8,400.2 712.7,398.0 724,395 C735.3,392.0 741.2,385.5 747,383 C752.8,380.5 750.8,380.5 759,380 C767.2,379.5 785.7,379.7 796,380 C806.3,380.3 810.3,379.0 821,382 C831.7,385.0 851.8,394.2 860,398 C868.2,401.8 863.3,401.5 870,405 C876.7,408.5 890.0,415.3 900,419 C910.0,422.7 923.8,424.3 930,427 C936.2,429.7 932.5,432.0 937,435 C941.5,438.0 950.8,441.8 957,445 C963.2,448.2 969.5,449.8 974,454 C978.5,458.2 982.0,466.3 984,470 C986.0,473.7 985.7,475.0 986,476 M491,339 L493,357 M532,314 C533.2,314.5 534.3,316.2 539,317 C543.7,317.8 549.0,317.3 560,319 C571.0,320.7 596.3,323.7 605,327 C613.7,330.3 609.2,336.3 612,339 C614.8,341.7 617.8,342.8 622,343 C626.2,343.2 633.0,339.0 637,340 C641.0,341.0 639.8,346.5 646,349 C652.2,351.5 668.7,352.5 674,355 C679.3,357.5 677.5,361.2 678,364 C678.5,366.8 675.7,369.3 677,372 C678.3,374.7 680.7,378.8 686,380 C691.3,381.2 702.2,380.3 709,379 C715.8,377.7 722.7,372.8 727,372 C731.3,371.2 731.7,372.2 735,374 C738.3,375.8 745.0,381.5 747,383 M747,383 C748.2,380.7 749.5,374.2 754,369 C758.5,363.8 767.0,356.0 774,352 C781.0,348.0 788.2,348.2 796,345 C803.8,341.8 816.3,338.5 821,333 C825.7,327.5 822.3,316.3 824,312 C825.7,307.7 827.3,308.5 831,307 C834.7,305.5 841.2,305.2 846,303 C850.8,300.8 856.8,295.8 860,294 C863.2,292.2 863.0,294.0 865,292 C867.0,290.0 869.5,286.3 872,282 C874.5,277.7 876.2,269.5 880,266 C883.8,262.5 885.5,262.7 895,261 C904.5,259.3 927.8,257.7 937,256 C946.2,254.3 945.5,253.2 950,251 C954.5,248.8 958.7,244.8 964,243 C969.3,241.2 978.3,241.5 982,240 C985.7,238.5 984.0,236.5 986,234 C988.0,231.5 991.3,228.7 994,225 C996.7,221.3 1000.7,214.2 1002,212 M799,344 C798.2,349.0 794.5,366.5 794,374 C793.5,381.5 794.3,382.2 796,389 C797.7,395.8 803.0,404.0 804,415 C805.0,426.0 801.2,445.8 802,455 C802.8,464.2 805.8,463.8 809,470 C812.2,476.2 818.5,486.2 821,492 C823.5,497.8 825.7,500.0 824,505 C822.3,510.0 814.0,518.0 811,522 C808.0,526.0 806.8,527.8 806,529 M831,359 C834.2,357.7 841.5,356.3 850,351 C858.5,345.7 872.8,330.2 882,327 C891.2,323.8 895.8,329.5 905,332 C914.2,334.5 928.0,340.0 937,342 C946.0,344.0 953.2,344.8 959,344 C964.8,343.2 967.0,338.8 972,337 C977.0,335.2 981.2,336.0 989,333 C996.8,330.0 1011.8,321.0 1019,319 C1026.2,317.0 1029.8,320.7 1032,321 M404,446 C405.7,447.8 408.2,454.2 414,457 C419.8,459.8 434.0,460.0 439,463 C444.0,466.0 441.5,472.8 444,475 C446.5,477.2 448.7,475.0 454,476 C459.3,477.0 469.3,480.0 476,481 C482.7,482.0 489.8,480.5 494,482 C498.2,483.5 494.8,486.2 501,490 C507.2,493.8 523.8,502.0 531,505 C538.2,508.0 538.0,507.3 544,508 C550.0,508.7 562.3,512.0 567,509 C571.7,506.0 570.3,495.7 572,490 C573.7,484.3 576.5,480.0 577,475 C577.5,470.0 575.0,465.5 575,460 C575.0,454.5 573.7,445.2 577,442 C580.3,438.8 585.3,441.3 595,441 C604.7,440.7 628.3,440.2 635,440 M590,405 C593.3,407.0 602.5,411.7 610,417 C617.5,422.3 628.0,429.8 635,437 C642.0,444.2 647.2,455.0 652,460 C656.8,465.0 657.8,465.7 664,467 C670.2,468.3 681.5,466.3 689,468 C696.5,469.7 701.5,473.8 709,477 C716.5,480.2 728.2,483.7 734,487 C739.8,490.3 741.8,493.3 744,497 C746.2,500.7 747.0,503.2 747,509 C747.0,514.8 744.8,522.8 744,532 C743.2,541.2 742.3,558.7 742,564 M444,465 C445.3,467.0 450.2,473.3 452,477 C453.8,480.7 453.0,485.5 455,487 C457.0,488.5 460.5,487.0 464,486 C467.5,485.0 474.0,481.8 476,481 M481,557 C481.8,558.3 483.5,562.2 486,565 C488.5,567.8 490.5,571.8 496,574 C501.5,576.2 512.7,576.2 519,578 C525.3,579.8 529.8,582.7 534,585 C538.2,587.3 540.3,588.3 544,592 C547.7,595.7 551.7,603.2 556,607 C560.3,610.8 565.2,613.3 570,615 C574.8,616.7 582.5,616.7 585,617 M534,584 C535.7,582.3 539.0,577.2 544,574 C549.0,570.8 557.2,566.7 564,565 C570.8,563.3 577.3,563.7 585,564 C592.7,564.3 604.2,568.2 610,567 C615.8,565.8 618.3,558.7 620,557 M304,636 C306.7,636.7 315.7,640.2 320,640 C324.3,639.8 324.2,633.8 330,635 C335.8,636.2 347.7,645.3 355,647 C362.3,648.7 365.0,644.3 374,645 C383.0,645.7 398.2,648.5 409,651 C419.8,653.5 430.7,660.2 439,660 C447.3,659.8 454.8,652.5 459,650 C463.2,647.5 462.3,645.7 464,645 C465.7,644.3 465.7,646.8 469,646 C472.3,645.2 479.8,642.7 484,640 C488.2,637.3 490.3,634.7 494,630 C497.7,625.3 503.5,616.2 506,612 C508.5,607.8 503.8,609.2 509,605 C514.2,600.8 531.2,590.3 537,587 C542.8,583.7 542.8,585.3 544,585 M620,542 C630.7,541.8 660.8,541.5 684,541 C707.2,540.5 729.7,539.3 759,539 C788.3,538.7 843.2,539.0 860,539 M620,557 C622.5,557.8 628.3,560.8 635,562 C641.7,563.2 651.8,563.2 660,564 C668.2,564.8 675.8,567.0 684,567 C692.2,567.0 698.2,564.5 709,564 C719.8,563.5 736.5,563.2 749,564 C761.5,564.8 774.0,568.2 784,569 C794.0,569.8 800.7,569.8 809,569 C817.3,568.2 829.8,564.8 834,564 M674,564 C672.8,566.5 669.3,572.8 667,579 C664.7,585.2 660.5,594.3 660,601 C659.5,607.7 663.3,616.0 664,619 M823,540 C824.0,541.3 827.2,544.7 829,548 C830.8,551.3 833.7,556.7 834,560 C834.3,563.3 832.8,565.8 831,568 C829.2,570.2 824.3,572.2 823,573 M537,691 C537.3,688.7 535.3,683.5 539,677 C542.7,670.5 551.8,660.8 559,652 C566.2,643.2 575.3,631.8 582,624 C588.7,616.2 594.3,610.7 599,605 C603.7,599.3 608.2,592.5 610,590 M573,686 C576.5,681.7 586.8,669.8 594,660 C601.2,650.2 612.2,636.2 616,627 C619.8,617.8 616.8,608.7 617,605 M547,600 C549.0,602.5 552.0,612.2 559,615 C566.0,617.8 584.0,616.7 589,617 M659,600 C663.5,604.8 679.2,622.8 686,629 C692.8,635.2 695.2,634.8 700,637 C704.8,639.2 709.7,639.0 715,642 C720.3,645.0 726.2,651.5 732,655 C737.8,658.5 745.0,661.0 750,663 C755.0,665.0 760.0,666.3 762,667 M686,629 C685.2,632.5 682.2,639.0 681,650 C679.8,661.0 680.2,683.0 679,695 C677.8,707.0 674.8,717.5 674,722" stroke="#eef2f7" stroke-width="0.9" stroke-dasharray="7 3"/>
<path d="M427,314 C428.2,313.2 431.2,309.3 434,309 C436.8,308.7 439.8,313.0 444,312 C448.2,311.0 454.8,304.8 459,303 C463.2,301.2 464.5,303.5 469,301 C473.5,298.5 481.2,291.2 486,288 C490.8,284.8 494.7,283.0 498,282 C501.3,281.0 502.5,281.0 506,282 C509.5,283.0 515.7,286.5 519,288 C522.3,289.5 523.8,289.3 526,291 C528.2,292.7 531.0,296.8 532,298 M498,282 C498.5,283.3 500.2,285.5 501,290 C501.8,294.5 502.5,302.8 503,309 C503.5,315.2 502.8,322.0 504,327 C505.2,332.0 509.0,336.0 510,339 C511.0,342.0 509.2,342.8 510,345 C510.8,347.2 515.3,350.0 515,352 C514.7,354.0 505.3,352.5 508,357 C510.7,361.5 526.7,374.2 531,379 C535.3,383.8 534.8,381.8 534,386 C533.2,390.2 526.0,400.0 526,404 C526.0,408.0 530.2,407.8 534,410 C537.8,412.2 545.7,413.8 549,417 C552.3,420.2 552.0,426.7 554,429 C556.0,431.3 558.3,431.5 561,431 C563.7,430.5 566.8,427.2 570,426 C573.2,424.8 575.0,423.8 580,424 C585.0,424.2 595.8,426.2 600,427 C604.2,427.8 595.0,429.8 605,429 C615.0,428.2 648.0,422.3 660,422 C672.0,421.7 667.5,425.7 677,427 C686.5,428.3 699.2,428.5 717,430 C734.8,431.5 771.3,434.0 784,436 C796.7,438.0 791.3,438.5 793,442 C794.7,445.5 791.8,451.5 794,457 C796.2,462.5 801.8,470.0 806,475 C810.2,480.0 815.2,482.5 819,487 C822.8,491.5 827.2,495.8 829,502 C830.8,508.2 829.7,517.0 830,524 C830.3,531.0 832.0,538.2 831,544 C830.0,549.8 827.7,554.0 824,559 C820.3,564.0 813.7,569.8 809,574 C804.3,578.2 799.0,580.7 796,584 C793.0,587.3 794.3,591.2 791,594 C787.7,596.8 782.2,599.0 776,601 C769.8,603.0 761.0,604.7 754,606 C747.0,607.3 739.3,608.2 734,609 C728.7,609.8 726.2,609.8 722,611 C717.8,612.2 711.2,615.2 709,616 M471,353 C472.7,352.0 474.7,348.5 481,347 C487.3,345.5 501.0,344.3 509,344 C517.0,343.7 523.7,343.3 529,345 C534.3,346.7 537.3,350.8 541,354 C544.7,357.2 546.3,359.3 551,364 C555.7,368.7 565.0,378.7 569,382 C573.0,385.3 569.8,381.7 575,384 C580.2,386.3 592.5,393.2 600,396 C607.5,398.8 615.5,397.8 620,401 C624.5,404.2 624.5,411.0 627,415 C629.5,419.0 631.7,419.2 635,425 C638.3,430.8 642.2,443.0 647,450 C651.8,457.0 658.7,461.2 664,467 C669.3,472.8 674.8,479.5 679,485 C683.2,490.5 686.8,496.3 689,500 C691.2,503.7 691.5,505.8 692,507 M739,415 C742.3,411.5 749.5,399.5 759,394 C768.5,388.5 786.0,383.7 796,382 C806.0,380.3 813.5,384.3 819,384 C824.5,383.7 824.8,380.7 829,380 C833.2,379.3 840.2,381.7 844,380 C847.8,378.3 843.5,375.8 852,370 C860.5,364.2 885.3,351.3 895,345 C904.7,338.7 901.7,334.7 910,332 C918.3,329.3 937.2,329.0 945,329 C952.8,329.0 953.8,330.5 957,332 C960.2,333.5 960.7,337.7 964,338 C967.3,338.3 972.8,334.8 977,334 C981.2,333.2 981.5,335.7 989,333 C996.5,330.3 1016.5,322.8 1022,318 C1027.5,313.2 1021.7,308.7 1022,304 C1022.3,299.3 1026.2,293.2 1024,290 C1021.8,286.8 1010.7,289.2 1009,285 C1007.3,280.8 1011.5,270.0 1014,265 C1016.5,260.0 1018.5,259.2 1024,255 C1029.5,250.8 1041.0,243.5 1047,240 C1053.0,236.5 1057.7,236.5 1060,234 C1062.3,231.5 1061.7,228.0 1061,225 C1060.3,222.0 1056.8,217.5 1056,216 M600,429 C599.2,431.7 595.5,440.3 595,445 C594.5,449.7 597.5,453.3 597,457 C596.5,460.7 595.0,463.2 592,467 C589.0,470.8 581.8,476.2 579,480 C576.2,483.8 575.5,486.7 575,490 C574.5,493.3 576.8,497.7 576,500 C575.2,502.3 570.7,501.7 570,504 C569.3,506.3 570.3,511.0 572,514 C573.7,517.0 577.5,519.0 580,522 C582.5,525.0 584.2,528.5 587,532 C589.8,535.5 592.0,541.0 597,543 C602.0,545.0 613.7,543.8 617,544 M623,500 C627.0,498.7 638.8,494.2 647,492 C655.2,489.8 661.7,487.7 672,487 C682.3,486.3 698.7,487.2 709,488 C719.3,488.8 727.3,489.2 734,492 C740.7,494.8 744.8,500.0 749,505 C753.2,510.0 757.0,515.5 759,522 C761.0,528.5 760.3,537.3 761,544 C761.7,550.7 765.0,557.8 763,562 C761.0,566.2 753.8,566.5 749,569 C744.2,571.5 740.7,572.8 734,577 C727.3,581.2 716.5,590.5 709,594 C701.5,597.5 694.8,598.8 689,598 C683.2,597.2 678.8,590.3 674,589 C669.2,587.7 664.5,590.0 660,590 C655.5,590.0 650.3,592.5 647,589 C643.7,585.5 644.0,574.0 640,569 C636.0,564.0 626.3,563.2 623,559 C619.7,554.8 620.0,553.8 620,544 C620.0,534.2 622.5,507.3 623,500 M744,405 C742.8,407.5 738.7,414.7 737,420 C735.3,425.3 734.5,431.2 734,437 C733.5,442.8 734.0,448.7 734,455 C734.0,461.3 734.8,470.5 734,475 C733.2,479.5 731.0,479.5 729,482 C727.0,484.5 724.0,486.7 722,490 C720.0,493.3 718.5,499.0 717,502 C715.5,505.0 713.7,507.0 713,508 M734,472 C735.7,472.2 741.2,472.0 744,473 C746.8,474.0 745.2,476.5 751,478 C756.8,479.5 772.3,481.7 779,482 C785.7,482.3 786.5,479.5 791,480 C795.5,480.5 801.8,485.0 806,485 C810.2,485.0 807.0,480.3 816,480 C825.0,479.7 850.2,483.7 860,483 C869.8,482.3 864.2,478.0 875,476 C885.8,474.0 911.8,472.3 925,471 C938.2,469.7 945.8,469.7 954,468 C962.2,466.3 966.8,463.0 974,461 C981.2,459.0 990.7,458.3 997,456 C1003.3,453.7 1005.8,449.7 1012,447 C1018.2,444.3 1029.5,440.3 1034,440 C1038.5,439.7 1037.7,443.0 1039,445 C1040.3,447.0 1040.3,450.0 1042,452 C1043.7,454.0 1047.8,456.2 1049,457 M791,478 C789.8,479.5 786.5,483.3 784,487 C781.5,490.7 776.8,494.2 776,500 C775.2,505.8 781.5,518.3 779,522 C776.5,525.7 764.0,522.0 761,522 M729,536 C738.2,535.7 772.8,534.7 784,534 C795.2,533.3 790.2,532.8 796,532 C801.8,531.2 812.7,529.8 819,529 C825.3,528.2 829.5,527.5 834,527 C838.5,526.5 844.0,526.2 846,526 M763,552 C766.5,552.0 776.3,550.8 784,552 C791.7,553.2 800.7,556.5 809,559 C817.3,561.5 827.2,564.5 834,567 C840.8,569.5 844.0,571.8 850,574 C856.0,576.2 863.8,579.0 870,580 C876.2,581.0 879.2,579.7 887,580 C894.8,580.3 912.0,581.7 917,582 M786,667 C787.3,664.2 789.3,654.3 794,650 C798.7,645.7 807.7,644.5 814,641 C820.3,637.5 826.0,632.7 832,629 C838.0,625.3 842.5,622.3 850,619 C857.5,615.7 868.7,613.2 877,609 C885.3,604.8 893.5,598.2 900,594 C906.5,589.8 913.2,586.0 916,584 C918.8,582.0 916.8,582.3 917,582 M722,554 C726.2,557.3 738.7,566.3 747,574 C755.3,581.7 764.5,592.8 772,600 C779.5,607.2 785.8,612.0 792,617 C798.2,622.0 804.5,626.0 809,630 C813.5,634.0 813.5,637.7 819,641 C824.5,644.3 835.8,646.0 842,650 C848.2,654.0 851.5,660.7 856,665 C860.5,669.3 866.8,674.2 869,676 M764,563 C769.3,566.5 787.7,577.8 796,584 C804.3,590.2 806.3,593.7 814,600 C821.7,606.3 834.2,615.8 842,622 C849.8,628.2 854.5,632.0 861,637 C867.5,642.0 877.7,649.5 881,652 M560,597 C562.8,596.2 575.0,590.8 577,592 C579.0,593.2 572.8,599.5 572,604 C571.2,608.5 571.5,614.7 572,619 C572.5,623.3 574.5,628.2 575,630 M580,562 C580.3,564.8 582.5,573.7 582,579 C581.5,584.3 577.8,591.5 577,594 M663,546 C658.3,547.3 642.2,551.3 635,554 C627.8,556.7 623.0,557.8 620,562 C617.0,566.2 618.7,574.5 617,579 C615.3,583.5 614.5,585.3 610,589 C605.5,592.7 595.8,596.7 590,601 C584.2,605.3 577.5,612.7 575,615 M674,564 C674.5,568.2 677.0,580.7 677,589 C677.0,597.3 674.8,607.2 674,614 C673.2,620.8 672.3,627.3 672,630 M709,589 C709.5,592.3 709.8,602.2 712,609 C714.2,615.8 720.3,626.5 722,630 M570,621 C570.7,621.5 565.0,623.3 574,624 C583.0,624.7 611.5,624.5 624,625 C636.5,625.5 640.7,627.7 649,627 C657.3,626.3 665.5,623.2 674,621 C682.5,618.8 691.5,615.5 700,614 C708.5,612.5 716.0,613.5 725,612 C734.0,610.5 749.2,606.2 754,605 M414,709 C415.7,707.7 421.8,705.2 424,701 C426.2,696.8 424.5,688.0 427,684 C429.5,680.0 436.2,679.2 439,677 C441.8,674.8 441.5,672.5 444,671 C446.5,669.5 449.8,668.5 454,668 C458.2,667.5 463.2,670.2 469,668 C474.8,665.8 480.7,657.0 489,655 C497.3,653.0 510.7,659.0 519,656 C527.3,653.0 534.3,641.0 539,637 C543.7,633.0 545.8,634.5 547,632 C548.2,629.5 546.5,626.5 546,622 C545.5,617.5 543.8,609.2 544,605 C544.2,600.8 542.7,598.7 547,597 C551.3,595.3 566.2,595.3 570,595 M547,691 C547.2,688.3 545.2,680.7 548,675 C550.8,669.3 561.7,662.5 564,657 C566.3,651.5 560.3,647.3 562,642 C563.7,636.7 572.3,630.8 574,625 C575.7,619.2 571.5,612.2 572,607 C572.5,601.8 576.2,596.2 577,594 M574,615 L589,600 M676,600 C675.8,602.8 676.2,612.5 675,617 C673.8,621.5 670.3,621.5 669,627 C667.7,632.5 667.0,640.3 667,650 C667.0,659.7 670.8,677.5 669,685 C667.2,692.5 658.5,690.5 656,695 C653.5,699.5 655.2,706.5 654,712 C652.8,717.5 649.8,725.3 649,728 M713,600 C714.5,602.8 720.3,610.3 722,617 C723.7,623.7 721.7,634.2 723,640 C724.3,645.8 728.7,647.8 730,652 C731.3,656.2 729.7,658.7 731,665 C732.3,671.3 736.8,685.8 738,690" stroke="#faab5d" stroke-width="3"/>
</g>
<g font-family="Liberation Sans, sans-serif" font-size="13.5" fill="#8c8c8c" stroke="#f9f9f9" stroke-width="2.2" paint-order="stroke" stroke-linejoin="round">
<text x="530" y="310">延庆区</text>
<text x="637" y="409">昌平区</text>
<text x="806" y="368">怀柔区</text>
<text x="895" y="344">密云区</text>
<text x="815" y="447">顺义区</text>
<text x="1012" y="443">平谷区</text>
<text x="666" y="519">海淀区</text>
<text x="581" y="528">门头沟区</text>
<text x="560" y="561">石景山区</text>
<text x="714" y="552">东城区</text>
<text x="661" y="564">丰台区</text>
<text x="816" y="540">通州区</text>
<text x="600" y="610">房山区</text>
<text x="683" y="617">大兴区</text>
<text x="667" y="737">固安县</text>
<text x="716" y="513" fill="#222">北京</text>
</g>
<polygon points="697.50,527.60 699.50,533.05 705.30,533.27 700.73,536.85 702.32,542.43 697.50,539.20 692.68,542.43 694.27,536.85 689.70,533.27 695.50,533.05" fill="#f00000"/>
<path d="M663.7 420.5 L663.7 436.8 L667.2 433.3 L670.2 440.3 L672.8 439.2 L669.9 432.4 L674.8 432.4 Z" fill="#fff" stroke="#0c0c30" stroke-width="1" stroke-linejoin="miter"/>
</svg>
</div><!--endmap-->
<div id="mapview">
<div class="a" style="left:324px;top:154px;width:128px;height:24px;background:#6a6a6a"></div>
<svg style="left:0;top:0" width="1206" height="906">
<defs><radialGradient id="gl2" cx="0.6" cy="0.6" r="0.7"><stop offset="0" stop-color="#a8d8ff"/><stop offset="0.6" stop-color="#3a8ee6"/><stop offset="1" stop-color="#1a5fb0"/></radialGradient></defs>
<circle cx="236" cy="166" r="7" fill="url(#gl2)"/>
<path d="M230 162 Q233 159 237 160 Q236 163 233 164 Q232 167 230 168 Z M238 160 Q242 161 242 164 Q240 165 239 163 Z" fill="#5fae3a"/>
<rect x="337.5" y="159.5" width="13" height="13" fill="#5fb0f0" stroke="#3a7fd5"/>
<path d="M338 160 L350 160 L350 166 Q344 162 338 165 Z" fill="#7cc04a"/>
<path d="M338 165 Q344 162 350 166" fill="none" stroke="#f0b050" stroke-width="1.2"/>
<path d="M434.5 162.5 L442.5 170.5 M442.5 162.5 L434.5 170.5" stroke="#fff" stroke-width="1.6"/>
<path d="M1163 162 h8 l-4 4.5 z" fill="#333"/>
<rect x="217" y="178" width="959" height="2" fill="#5a5a5a"/>
<rect x="235" y="180" width="923" height="17" fill="#fafafa"/>
<rect x="217" y="197" width="941" height="1" fill="#5a5a5a"/>
<rect x="217" y="180" width="17" height="17" fill="#fff"/>
<rect x="234" y="178" width="1" height="684" fill="#5a5a5a"/>
<path d="M222.5 183 V191.5 H229" stroke="#111" stroke-width="2" fill="none"/>
<path d="M239.5 193V197 M249.5 193V197 M260.5 193V197 M270.5 189V197 M281.5 193V197 M291.5 193V197 M302.5 193V197 M312.5 193V197 M323.5 181V197 M333.5 193V197 M344.5 193V197 M354.5 193V197 M365.5 193V197 M375.5 189V197 M386.5 193V197 M396.5 193V197 M407.5 193V197 M417.5 193V197 M428.5 181V197 M438.5 193V197 M449.5 193V197 M459.5 193V197 M470.5 193V197 M481.5 189V197 M491.5 193V197 M502.5 193V197 M512.5 193V197 M523.5 193V197 M533.5 181V197 M544.5 193V197 M554.5 193V197 M565.5 193V197 M575.5 193V197 M586.5 189V197 M596.5 193V197 M607.5 193V197 M617.5 193V197 M628.5 193V197 M638.5 181V197 M649.5 193V197 M659.5 193V197 M670.5 193V197 M680.5 193V197 M691.5 189V197 M701.5 193V197 M712.5 193V197 M722.5 193V197 M733.5 193V197 M744.5 181V197 M754.5 193V197 M765.5 193V197 M775.5 193V197 M786.5 193V197 M796.5 189V197 M807.5 193V197 M817.5 193V197 M828.5 193V197 M838.5 193V197 M849.5 181V197 M859.5 193V197 M870.5 193V197 M880.5 193V197 M891.5 193V197 M901.5 189V197 M912.5 193V197 M922.5 193V197 M933.5 193V197 M943.5 193V197 M954.5 181V197 M964.5 193V197 M975.5 193V197 M985.5 193V197 M996.5 193V197 M1007.5 189V197 M1017.5 193V197 M1028.5 193V197 M1038.5 193V197 M1049.5 193V197 M1059.5 181V197 M1070.5 193V197 M1080.5 193V197 M1091.5 193V197 M1101.5 193V197 M1112.5 189V197 M1122.5 193V197 M1133.5 193V197 M1143.5 193V197 M1154.5 193V197" stroke="#111" stroke-width="1"/>
<rect x="1157" y="180" width="1" height="17" fill="#111"/>
<path d="M218 286.5H234 M230 275.5H234 M230 265.5H234 M230 254.5H234 M230 244.5H234 M226 233.5H234 M230 223.5H234 M230 212.5H234 M230 202.5H234 M218 391.5H234 M230 381.5H234 M230 370.5H234 M230 360.5H234 M230 349.5H234 M226 339.5H234 M230 328.5H234 M230 317.5H234 M230 307.5H234 M230 296.5H234 M218 496.5H234 M230 486.5H234 M230 475.5H234 M230 465.5H234 M230 454.5H234 M226 444.5H234 M230 433.5H234 M230 423.5H234 M230 412.5H234 M230 402.5H234 M218 602.5H234 M230 591.5H234 M230 580.5H234 M230 570.5H234 M230 559.5H234 M226 549.5H234 M230 538.5H234 M230 528.5H234 M230 517.5H234 M230 507.5H234 M218 707.5H234 M230 696.5H234 M230 686.5H234 M230 675.5H234 M230 665.5H234 M226 654.5H234 M230 644.5H234 M230 633.5H234 M230 623.5H234 M230 612.5H234 M218 812.5H234 M230 801.5H234 M230 791.5H234 M230 780.5H234 M230 770.5H234 M226 759.5H234 M230 749.5H234 M230 738.5H234 M230 728.5H234 M230 717.5H234 M230 854.5H234 M230 843.5H234 M230 833.5H234 M230 822.5H234" stroke="#111" stroke-width="1"/>
<rect x="217" y="862" width="17" height="1" fill="#5a5a5a"/>
<rect x="660" y="181" width="1.2" height="16" fill="#e00"/>
<rect x="217" y="422.5" width="13" height="1.2" fill="#e00"/>
<rect x="217" y="219.5" width="1.5" height="1.5" fill="#e00"/>
<rect x="1159" y="240" width="14" height="605" fill="#c8c8c8"/>
<path d="M1162.5 209.5 L1166 206 L1169.5 209.5" stroke="#555" stroke-width="1.8" fill="none"/>
<path d="M1162.5 852 L1166 855.5 L1169.5 852" stroke="#555" stroke-width="1.8" fill="none"/>
<rect x="251.5" y="864" width="887" height="14" fill="#c8c8c8"/>
<path d="M246 866.5 L242.5 870 L246 873.5" stroke="#555" stroke-width="1.8" fill="none"/>
<path d="M1146 866.5 L1149.5 870 L1146 873.5" stroke="#555" stroke-width="1.8" fill="none"/>
<path d="M1157.5 877.5 V862.5 H1173" stroke="#666" stroke-width="1" fill="none"/>
<rect x="1174.5" y="197" width="1" height="665" fill="#e0e0e0"/>
<rect x="235" y="878.5" width="920" height="1" fill="#e4e4e4"/>
<path d="M1188 166 Q1188 163 1191 163 L1200 163 Q1202 163 1202 166 L1202 170 L1188 170 Z" fill="#f7c77a" stroke="#e08a1e" stroke-width="1"/>
<rect x="1195" y="166" width="6" height="5" fill="#5cb82a"/>
<rect x="1188" y="172" width="4" height="5" fill="#2b7de9"/><rect x="1193" y="172" width="4" height="5" fill="#2b7de9"/>
<path d="M1190 168.5 V172 M1190 168.5 H1193" stroke="#e08a1e" stroke-width="0.8" fill="none"/>
<rect x="1187" y="260" width="15" height="14" fill="#d8e4f4" stroke="#7a9cc8" stroke-width="0.8"/>
<path d="M1189 272 L1195 266 M1196 262.5 A3 3 0 1 0 1200 266.5 L1198 266 L1196.5 264.5 Z" stroke="#4a6fa8" stroke-width="2" fill="#fff"/>
<rect x="1188.5" y="332.5" width="12" height="13" fill="#fff" stroke="#555" stroke-width="1"/>
<path d="M1191 336.5h7M1191 339.5h7M1191 342.5h7" stroke="#555" stroke-width="1"/>
<path d="M1185.5 340 L1189 344 L1192 338" stroke="#e21c1c" stroke-width="2" fill="none"/>
<rect x="1187.5" y="413.5" width="14" height="13" fill="#fff" stroke="#2b6fd0" stroke-width="1.6"/>
<path d="M1190.5 417.5h5M1190.5 420h5M1190.5 422.5h5" stroke="#2b6fd0" stroke-width="1"/>
</svg>
<div class="t" style="left:247px;top:160px;color:#444">内容视窗</div>
<div class="t" style="left:355px;top:160px;color:#fff">北京市_Java</div>
<div class="a" style="left:235px;top:180px;width:922px;height:12px;overflow:hidden">
<div class="t" style="left:-15.7px;top:-1.5px;font-family:'Liberation Mono',monospace;font-size:11.5px;color:#111;transform-origin:0 0;transform:scaleY(0.92)">115.250</div>
<div class="t" style="left:89.5px;top:-1.5px;font-family:'Liberation Mono',monospace;font-size:11.5px;color:#111;transform-origin:0 0;transform:scaleY(0.92)">115.500</div>
<div class="t" style="left:194.7px;top:-1.5px;font-family:'Liberation Mono',monospace;font-size:11.5px;color:#111;transform-origin:0 0;transform:scaleY(0.92)">115.750</div>
<div class="t" style="left:299.9px;top:-1.5px;font-family:'Liberation Mono',monospace;font-size:11.5px;color:#111;transform-origin:0 0;transform:scaleY(0.92)">116.000</div>
<div class="t" style="left:405.1px;top:-1.5px;font-family:'Liberation Mono',monospace;font-size:11.5px;color:#111;transform-origin:0 0;transform:scaleY(0.92)">116.250</div>
<div class="t" style="left:510.3px;top:-1.5px;font-family:'Liberation Mono',monospace;font-size:11.5px;color:#111;transform-origin:0 0;transform:scaleY(0.92)">116.500</div>
<div class="t" style="left:615.5px;top:-1.5px;font-family:'Liberation Mono',monospace;font-size:11.5px;color:#111;transform-origin:0 0;transform:scaleY(0.92)">116.750</div>
<div class="t" style="left:720.7px;top:-1.5px;font-family:'Liberation Mono',monospace;font-size:11.5px;color:#111;transform-origin:0 0;transform:scaleY(0.92)">117.000</div>
<div class="t" style="left:825.9px;top:-1.5px;font-family:'Liberation Mono',monospace;font-size:11.5px;color:#111;transform-origin:0 0;transform:scaleY(0.92)">117.250</div>
</div>
<div class="a" style="left:217px;top:198px;width:17px;height:664px;overflow:hidden">
<div class="t" style="left:0.5px;top:-17.3px;font-family:'Liberation Mono',monospace;font-size:11.5px;color:#111;transform-origin:0 0;transform:rotate(-90deg) scaleY(0.95)">40.750</div>
<div class="t" style="left:0.5px;top:87.9px;font-family:'Liberation Mono',monospace;font-size:11.5px;color:#111;transform-origin:0 0;transform:rotate(-90deg) scaleY(0.95)">40.500</div>
<div class="t" style="left:0.5px;top:193.1px;font-family:'Liberation Mono',monospace;font-size:11.5px;color:#111;transform-origin:0 0;transform:rotate(-90deg) scaleY(0.95)">40.250</div>
<div class="t" style="left:0.5px;top:298.3px;font-family:'Liberation Mono',monospace;font-size:11.5px;color:#111;transform-origin:0 0;transform:rotate(-90deg) scaleY(0.95)">40.000</div>
<div class="t" style="left:0.5px;top:403.5px;font-family:'Liberation Mono',monospace;font-size:11.5px;color:#111;transform-origin:0 0;transform:rotate(-90deg) scaleY(0.95)">39.750</div>
<div class="t" style="left:0.5px;top:508.7px;font-family:'Liberation Mono',monospace;font-size:11.5px;color:#111;transform-origin:0 0;transform:rotate(-90deg) scaleY(0.95)">39.500</div>
<div class="t" style="left:0.5px;top:613.9px;font-family:'Liberation Mono',monospace;font-size:11.5px;color:#111;transform-origin:0 0;transform:rotate(-90deg) scaleY(0.95)">39.250</div>
</div>
<div class="t" style="left:1052px;top:842px;font-size:14px;line-height:18px;color:#a0a0a0">高级开发授权</div>
<div class="t" style="left:1203.5px;top:179.5px;font-size:11.5px;line-height:16px;color:#333;transform-origin:0 0;transform:rotate(90deg)">GDBCatalog</div>
<div class="t" style="left:1203.5px;top:276px;font-size:13px;line-height:16px;color:#333;transform-origin:0 0;transform:rotate(90deg)">工具箱</div>
<div class="t" style="left:1203.5px;top:347px;font-size:13px;line-height:16px;color:#333;transform-origin:0 0;transform:rotate(90deg)">数据检查</div>
<div class="t" style="left:1203.5px;top:429px;font-size:13px;line-height:16px;color:#333;transform-origin:0 0;transform:rotate(90deg)">专题图属性</div>
</div><!--endmapview-->
<!-- status bar -->
<svg style="left:0;top:0" width="1206" height="906"><g fill="#666"><rect x="1202" y="895" width="2" height="2"/><rect x="1199" y="898" width="2" height="2"/><rect x="1202" y="898" width="2" height="2"/><rect x="1196" y="901" width="2" height="2"/><rect x="1199" y="901" width="2" height="2"/><rect x="1202" y="901" width="2" height="2"/></g></svg>
<div class="a" style="left:1px;top:884px;width:1204px;height:1px;background:#c8c8c8"></div>
<div class="t" style="left:1048px;top:889px;font-size:13px;letter-spacing:0.12px;color:#333">x=116.31, y=40.17(度)</div>
</body></html>
